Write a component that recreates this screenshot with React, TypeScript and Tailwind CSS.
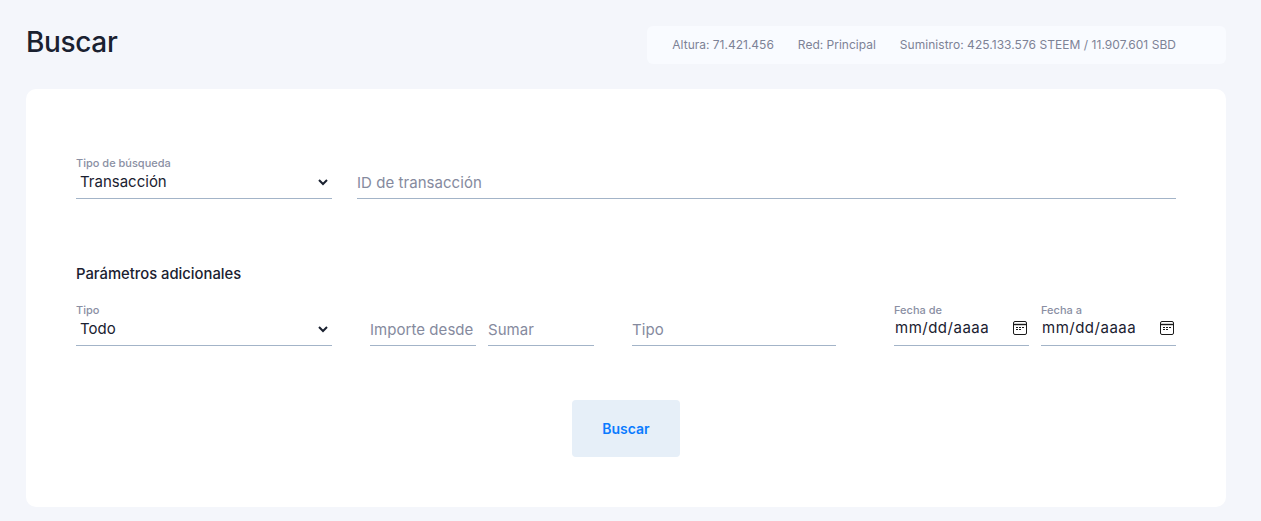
import React from 'react';

const ChevronDown = () => (
  <svg className="w-[10px] h-[7px] text-[#1a2130]" viewBox="0 0 10 7" fill="none" stroke="currentColor" strokeWidth={2}>
    <path d="M1 1l4 4 4-4" />
  </svg>
);

const CalendarIcon = () => (
  <svg className="w-[14px] h-[14px] text-[#1a1a1a]" viewBox="0 0 14 14" fill="none">
    <rect x="0.5" y="0.5" width="13" height="13" rx="1.5" stroke="currentColor" strokeWidth={1} />
    <path d="M1 3.5h12" stroke="currentColor" strokeWidth={1.4} />
    <path d="M3 6.5h2M6 6.5h2M9 6.5h2M3 8.5h2M6 8.5h2" stroke="currentColor" strokeWidth={1} />
  </svg>
);

const SelectField: React.FC<{ label: string; value: string }> = ({ label, value }) => (
  <div className="w-[256px] h-[43px] border-b border-[#a3b4c8] shrink-0">
    <div className="text-[11px] font-medium leading-[14px] text-[#8a8fa3]">{label}</div>
    <div className="flex items-center justify-between pl-[4px] pr-[4px] h-[24px]">
      <span className="text-[15px] text-[#1a2130]">{value}</span>
      <ChevronDown />
    </div>
  </div>
);

const TextField: React.FC<{ placeholder: string; className: string }> = ({ placeholder, className }) => (
  <input
    placeholder={placeholder}
    className={`h-[32px] border-b border-[#a3b4c8] text-[15px] tracking-[0.05px] outline-none placeholder:text-[#858a9e] bg-transparent ${className}`}
  />
);

const DateField: React.FC<{ label: string; className?: string }> = ({ label, className }) => (
  <div className={`w-[135px] h-[43px] border-b border-[#a3b4c8] ${className ?? ''}`}>
    <div className="text-[11px] font-medium leading-[14px] text-[#8a8fa3]">{label}</div>
    <div className="flex items-center justify-between pl-[1px] pr-[2px] h-[22px]">
      <span className="text-[15px] tracking-[0.5px] text-[#1a2130]">mm/dd/aaaa</span>
      <CalendarIcon />
    </div>
  </div>
);

export default function App() {
  return (
    <div className="min-h-[521px] bg-[#f4f6fb] pl-[26px] pr-[35px] font-['Inter',sans-serif] overflow-hidden">
      <header className="flex items-center justify-between h-[89px]">
        <h1 className="text-[28px] pb-[5px] font-medium text-[#1a2130] tracking-[-0.35px]">Buscar</h1>
        <div className="flex items-center gap-[24px] h-[38px] mt-[1px] pl-[25px] pr-[50px] rounded-md bg-[#f9fbff] text-[12px] text-[#7d8296]">
          <span>Altura: 71.421.456</span>
          <span>Red: Principal</span>
          <span className="tracking-[0.04px]">Suministro: 425.133.576 STEEM / 11.907.601 SBD</span>
        </div>
      </header>

      <main className="bg-white rounded-[10px] h-[418px] px-[50px] pt-[67px]">
        <div className="flex items-end gap-[25px]">
          <SelectField label="Tipo de búsqueda" value="Transacción" />
          <TextField placeholder="ID de transacción" className="flex-1 min-w-0" />
        </div>

        <h2 className="mt-[65px] text-[14.8px] leading-[20px] font-medium text-[#1a2130]">Parámetros adicionales</h2>

        <div className="flex items-end mt-[19px]">
          <SelectField label="Tipo" value="Todo" />
          <TextField placeholder="Importe desde" className="w-[106px] ml-[38px]" />
          <TextField placeholder="Sumar" className="w-[106px] ml-[12px]" />
          <TextField placeholder="Tipo" className="w-[204px] ml-[38px]" />
          <DateField label="Fecha de" className="ml-[58px]" />
          <DateField label="Fecha a" className="ml-[12px]" />
        </div>

        <div className="flex justify-center mt-[54px]">
          <button className="w-[108px] h-[57px] rounded bg-[#e6eff8] text-[14px] font-semibold text-[#0a7bff]">Buscar</button>
        </div>
      </main>
    </div>
  );
}
